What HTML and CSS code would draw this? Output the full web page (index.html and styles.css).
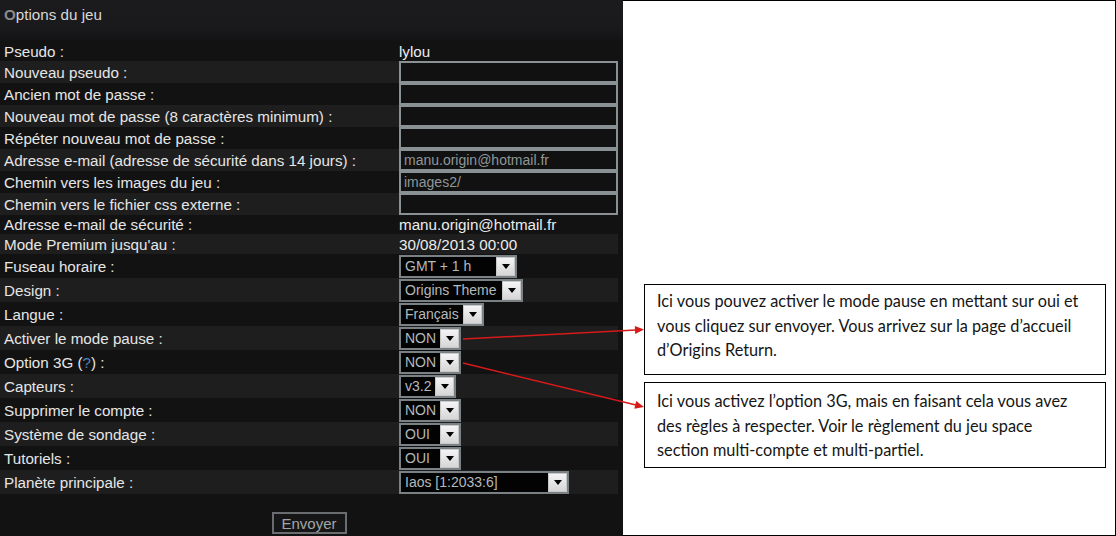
FILE: index.html
```html
<!DOCTYPE html>
<html lang="fr">
<head>
    <meta charset="UTF-8">
    <title>Options du jeu</title>
    <link rel="stylesheet" href="styles.css">
</head>
<body>
<div class="page">
    <div class="panel">
        <div class="panel-title"><span class="bullet">O</span>ptions du jeu</div>

        <table class="options">
            <tr class="row-text"><td>Pseudo :</td><td class="value">lylou</td></tr>
            <tr class="row-input"><td>Nouveau pseudo :</td><td><input type="text"></td></tr>
            <tr class="row-input"><td>Ancien mot de passe :</td><td><input type="password"></td></tr>
            <tr class="row-input"><td>Nouveau mot de passe (8 caractères minimum) :</td><td><input type="password"></td></tr>
            <tr class="row-input"><td>Répéter nouveau mot de passe :</td><td><input type="password"></td></tr>
            <tr class="row-input"><td>Adresse e-mail (adresse de sécurité dans 14 jours) :</td><td><input type="text" value="manu.origin@hotmail.fr"></td></tr>
            <tr class="row-input"><td>Chemin vers les images du jeu :</td><td><input type="text" value="images2/"></td></tr>
            <tr class="row-input"><td>Chemin vers le fichier css externe :</td><td><input type="text"></td></tr>
            <tr class="row-text short"><td>Adresse e-mail de sécurité :</td><td class="value">manu.origin@hotmail.fr</td></tr>
            <tr class="row-text"><td>Mode Premium jusqu'au :</td><td class="value">30/08/2013 00:00</td></tr>
            <tr class="row-select"><td>Fuseau horaire :</td><td><span class="select w-tz"><span class="select-value">GMT + 1 h</span><span class="select-btn"><svg width="8" height="5" viewBox="0 0 8 5"><polygon points="0,0 8,0 4,5" fill="#000"/></svg></span></span></td></tr>
            <tr class="row-select"><td>Design :</td><td><span class="select w-design"><span class="select-value">Origins Theme</span><span class="select-btn"><svg width="8" height="5" viewBox="0 0 8 5"><polygon points="0,0 8,0 4,5" fill="#000"/></svg></span></span></td></tr>
            <tr class="row-select"><td>Langue :</td><td><span class="select w-lang"><span class="select-value">Français</span><span class="select-btn"><svg width="8" height="5" viewBox="0 0 8 5"><polygon points="0,0 8,0 4,5" fill="#000"/></svg></span></span></td></tr>
            <tr class="row-select"><td>Activer le mode pause :</td><td><span class="select w-yn"><span class="select-value">NON</span><span class="select-btn"><svg width="8" height="5" viewBox="0 0 8 5"><polygon points="0,0 8,0 4,5" fill="#000"/></svg></span></span></td></tr>
            <tr class="row-select"><td>Option 3G (<a href="#" class="help">?</a>) :</td><td><span class="select w-yn"><span class="select-value">NON</span><span class="select-btn"><svg width="8" height="5" viewBox="0 0 8 5"><polygon points="0,0 8,0 4,5" fill="#000"/></svg></span></span></td></tr>
            <tr class="row-select"><td>Capteurs :</td><td><span class="select w-ver"><span class="select-value">v3.2</span><span class="select-btn"><svg width="8" height="5" viewBox="0 0 8 5"><polygon points="0,0 8,0 4,5" fill="#000"/></svg></span></span></td></tr>
            <tr class="row-select"><td>Supprimer le compte :</td><td><span class="select w-yn"><span class="select-value">NON</span><span class="select-btn"><svg width="8" height="5" viewBox="0 0 8 5"><polygon points="0,0 8,0 4,5" fill="#000"/></svg></span></span></td></tr>
            <tr class="row-select"><td>Système de sondage :</td><td><span class="select w-yn"><span class="select-value">OUI</span><span class="select-btn"><svg width="8" height="5" viewBox="0 0 8 5"><polygon points="0,0 8,0 4,5" fill="#000"/></svg></span></span></td></tr>
            <tr class="row-select"><td>Tutoriels :</td><td><span class="select w-yn"><span class="select-value">OUI</span><span class="select-btn"><svg width="8" height="5" viewBox="0 0 8 5"><polygon points="0,0 8,0 4,5" fill="#000"/></svg></span></span></td></tr>
            <tr class="row-select"><td>Planète principale :</td><td><span class="select w-planet"><span class="select-value">Iaos [1:2033:6]</span><span class="select-btn"><svg width="8" height="5" viewBox="0 0 8 5"><polygon points="0,0 8,0 4,5" fill="#000"/></svg></span></span></td></tr>
        </table>

        <div class="submit-row">
            <button class="submit" type="button">Envoyer</button>
        </div>
    </div>

    <div class="notes">
        <div class="note note-pause">
            Ici vous pouvez activer le mode pause en mettant sur oui et<br>
            vous cliquez sur envoyer. Vous arrivez sur la page d’accueil<br>
            d’Origins Return.
        </div>
        <div class="note note-3g">
            Ici vous activez l’option 3G, mais en faisant cela vous avez<br>
            des règles à respecter. Voir le règlement du jeu space<br>
            section multi-compte et multi-partiel.
        </div>
    </div>

    <!-- arrows from the selects to the notes -->
    <svg class="arrows" width="1116" height="536" viewBox="0 0 1116 536">
        <line x1="463" y1="339" x2="636" y2="330" stroke="#d61a1a" stroke-width="1.5"/>
        <polygon points="644,329.5 635.2,334 634.8,326" fill="#d61a1a"/>
        <line x1="463" y1="363" x2="636" y2="405" stroke="#d61a1a" stroke-width="1.5"/>
        <polygon points="644,407 634.3,408.8 636.2,401" fill="#d61a1a"/>
    </svg>
</div>
</body>
</html>
```

FILE: styles.css
```css
body {
    margin: 0;
    font-family: "Liberation Sans", Arial, sans-serif;
}

.page {
    position: relative;
    display: flex;
    width: 1116px;
    height: 536px;
    overflow: hidden;
}

/* left: game options panel */
.panel {
    width: 623px;
    height: 536px;
    background: #121213;
    color: #e6e6e6;
    font-size: 15.2px;
}

.panel-title {
    height: 41px;
    padding: 6px 4px 0;
    box-sizing: border-box;
    background: linear-gradient(to bottom, #1b1b1d 0, #1a1a1c 28px, #131315 40px);
    color: #d8d8d8;
    line-height: 17px;
}

.bullet {
    color: #8a8a8a;
    font-weight: bold;
}

.options {
    width: 618px;
    border-collapse: collapse;
}

.options td {
    padding: 0 0 0 4px;
    vertical-align: middle;
    white-space: nowrap;
}

.options td + td {
    width: 219px;
    padding: 0;
}

.options tr:nth-child(even) {
    background: #1e1e1f;
}

.row-text td {
    height: 20px;
}

.row-text.short td {
    height: 19px;
}

.row-input td {
    height: 22px;
}

.row-select td {
    height: 24px;
}

.value {
    color: #ececec;
}

.help {
    color: #4a86c0;
    text-decoration: none;
}

.options input {
    display: block;
    width: 219px;
    height: 22px;
    margin: 0;
    padding: 0 3px;
    box-sizing: border-box;
    border: 2px solid #8a9194;
    background: #111;
    color: #8f9699;
    font-family: "Liberation Sans", Arial, sans-serif;
    font-size: 14px;
}

/* fake dropdowns */
.select {
    display: flex;
    align-items: stretch;
    height: 23px;
    box-sizing: border-box;
    border: 2px solid #7a8185;
    background: #030303;
}

.select-value {
    flex: 1;
    padding-left: 4px;
    color: #b4b9bb;
    font-size: 14px;
    line-height: 19px;
}

.select-btn {
    width: 17px;
    display: flex;
    align-items: center;
    justify-content: center;
    border: 1px solid #c8c8c8;
    background: linear-gradient(to bottom, #f4f4f4, #d6d6d6);
}

.w-tz { width: 118px; }
.w-design { width: 124px; }
.w-lang { width: 85px; }
.w-yn { width: 62px; }
.w-ver { width: 57px; }
.w-planet { width: 170px; }

.submit-row {
    display: flex;
    justify-content: center;
    width: 618px;
    padding-top: 18px;
}

.submit {
    width: 75px;
    height: 22px;
    padding: 0;
    border: 2px solid #696d70;
    background: #161617;
    color: #a2a6a8;
    font-family: "Liberation Sans", Arial, sans-serif;
    font-size: 15px;
}

/* right: annotations */
.notes {
    flex: 1;
    box-sizing: border-box;
    border: 1px solid #000;
    border-left: none;
    background: #fff;
    padding: 283px 9px 0 21px;
    display: flex;
    flex-direction: column;
    gap: 7px;
}

.note {
    box-sizing: border-box;
    border: 1px solid #000;
    padding: 4px 6px 0 12px;
    font-family: Lato, "Open Sans", sans-serif;
    font-size: 16.3px;
    line-height: 24.5px;
    color: #151515;
    white-space: nowrap;
}

.note-pause {
    height: 91px;
}

.note-3g {
    height: 86px;
    padding-top: 6px;
}

.arrows {
    position: absolute;
    top: 0;
    left: 0;
    pointer-events: none;
}
```
